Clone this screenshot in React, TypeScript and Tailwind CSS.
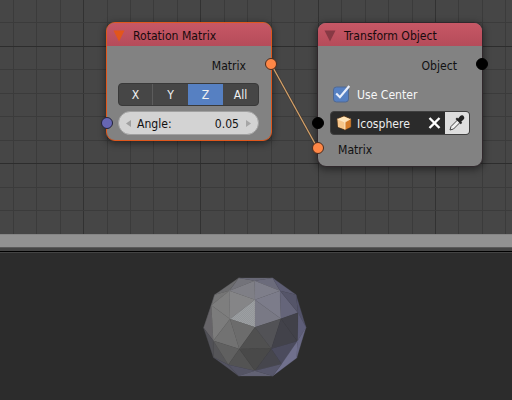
import type { ReactNode } from "react";

const columns = [13, 36, 60, 83, 107, 130, 153, 177, 200, 224, 247, 271, 294, 318, 341, 365, 388, 412, 435, 458, 482, 505];
const rows = [22, 46, 69, 93, 116, 140, 163, 187, 210];
const majors = [83, 200, 318, 435];

const facets: [string, string][] = [
  ["134,30 182,38 106,68", "#73737a"],
  ["134,30 236,30 182,38", "#686876"],
  ["236,30 258,68 182,38", "#6b6b7b"],
  ["236,30 306,80 258,68", "#5d5d73"],
  ["134,30 106,68 62,80", "#6b6b6d"],
  ["182,38 183,95 106,68", "#7f7f86"],
  ["182,38 258,68 183,95", "#7e7e8a"],
  ["62,80 106,68 52,112", "#757575"],
  ["106,68 108,153 52,112", "#7e7e7e"],
  ["106,68 183,95 108,153", "#858587"],
  ["183,95 183,178 108,153", "#94979a"],
  ["183,95 261,152 183,178", "#797985"],
  ["183,95 258,68 261,152", "#7c7c8a"],
  ["258,68 312,134 261,152", "#65657a"],
  ["258,68 306,80 312,134", "#555569"],
  ["306,80 336,178 312,134", "#525269"],
  ["312,134 336,178 310,220", "#5d5d78"],
  ["62,80 52,112 29,180", "#626065"],
  ["52,112 58,218 29,180", "#666468"],
  ["52,112 108,153 58,218", "#7c7c7c"],
  ["108,153 136,243 58,218", "#727272"],
  ["108,153 183,178 136,243", "#6c6c6c"],
  ["183,178 232,242 136,243", "#505050"],
  ["183,178 261,152 232,242", "#525256"],
  ["261,152 310,220 232,242", "#42424a"],
  ["261,152 312,134 310,220", "#414149"],
  ["29,180 58,218 58,268", "#515157"],
  ["58,218 103,290 58,268", "#555558"],
  ["58,218 136,243 103,290", "#606060"],
  ["136,243 183,308 103,290", "#535353"],
  ["136,243 232,242 183,308", "#494949"],
  ["232,242 263,288 183,308", "#46464d"],
  ["232,242 310,220 263,288", "#4b4b5d"],
  ["336,178 308,270 310,220", "#686884"],
  ["310,220 308,270 236,324 263,288", "#70708d"],
  ["58,268 103,290 134,324", "#545461"],
  ["103,290 183,308 134,324", "#545464"],
  ["183,308 236,324 134,324", "#626274"],
  ["183,308 263,288 236,324", "#57576b"],
];

function Grid() {
  return (
    <svg className="absolute inset-0" width="512" height="234" shapeRendering="crispEdges">
      {columns.map((x) => (
        <rect key={x} x={x} y="0" width="1" height="234" fill={majors.includes(x) ? "#323232" : "#3b3b3b"} />
      ))}
      {rows.map((y) => (
        <rect key={y} x="0" y={y} width="512" height="1" fill={y === 46 || y === 163 ? "#2d2d2d" : "#3b3b3b"} />
      ))}
    </svg>
  );
}

function Socket({ className }: { className: string }) {
  return <span className={`absolute h-3 w-3 rounded-full border ${className}`} />;
}

function NodeFrame({ title, active, className, children }: { title: string; active?: boolean; className: string; children: ReactNode }) {
  return (
    <section
      className={`absolute w-[166px] rounded-[9px] border bg-[#828282] shadow-[0_2px_7px_1px_rgba(0,0,0,0.42)] ${active ? "border-[#df571c]" : "border-[#30282c]"} ${className}`}
    >
      <header className="flex h-[23px] items-center rounded-t-[8px] bg-linear-to-b from-[#c75765] to-[#b54c5a] pl-[6px] text-[#180b0d]">
        <svg width="12" height="12" className="mt-[3px] shrink-0">
          <path d="M0.5 0.5h11L6 11.5z" fill={active ? "#e2561b" : "#873944"} />
        </svg>
        <span className="ml-[8px] mt-[2px]">{title}</span>
      </header>
      {children}
    </section>
  );
}

function AxisButtons() {
  return (
    <div className="ml-[11px] mt-[9px] flex h-[23px] w-[141px] overflow-hidden rounded-[4px] border border-[#393939] bg-[#464646] text-center leading-[22px] text-[#f1f1f1]">
      <span className="w-[34px] border-r border-[#5c5c5c]">X</span>
      <span className="w-[35px]">Y</span>
      <span className="w-[35px] bg-[#5680c2]">Z</span>
      <span className="flex-1">All</span>
    </div>
  );
}

function Sphere() {
  return (
    <svg width="124" height="118" viewBox="0 0 372 354" className="ml-[194px] mt-[15px] block">
      <defs>
        <pattern id="dither" width="6" height="6" patternUnits="userSpaceOnUse">
          <path d="M0 0h3v3H0zM3 3h3v3H3z" fill="#fff" opacity=".08" />
        </pattern>
      </defs>
      {facets.map(([points, color]) => (
        <polygon key={points} points={points} fill={color} stroke={color} strokeWidth="0.7" />
      ))}
      <polygon points="183,95 183,178 108,153" fill="url(#dither)" />
    </svg>
  );
}

export default function App() {
  return (
    <main className="flex h-[400px] w-[512px] flex-col overflow-hidden bg-[#2c2c2c] font-['DejaVu_Sans_Condensed','DejaVu_Sans',sans-serif] text-[12.1px] [font-stretch:75%] leading-[16px] text-[#111]">
      <div className="relative h-[234px] shrink-0 overflow-hidden bg-[#464646]">
        <Grid />
        <NodeFrame title="Rotation Matrix" active className="left-[106px] top-[22px] h-[119px]">
          <div className="mt-[12px] h-4 pr-[25px] text-right">Matrix</div>
          <AxisButtons />
          <div className="ml-[11px] mt-[5px] flex h-[24px] w-[141px] items-center justify-between rounded-full border border-[#a0a0a0] bg-[#d3d3d3] px-[7px]">
            <svg width="5" height="7"><path d="M5 0v7L0 3.5z" fill="#a0a0a0" /></svg>
            <span className="ml-[6px] mt-px flex-1">Angle:</span>
            <span className="mr-[7px] mt-px">0.05</span>
            <svg width="5" height="7"><path d="M0 0v7l5-3.5z" fill="#a6a6a6" /></svg>
          </div>
        </NodeFrame>
        <NodeFrame title="Transform Object" className="left-[317px] top-[22px] h-[145px]">
          <div className="mt-[12px] h-4 pr-[25px] text-right">Object</div>
          <div className="mt-[9px] flex h-5 items-center pl-[15px] text-[#f7f7f7]">
            <svg width="18" height="19" viewBox="0 0 18 19">
              <rect x="0.5" y="3" width="15" height="15" rx="3" fill="#5680c2" stroke="#506891" />
              <path d="M3.2 9.5l3.7 3.7L16.3 2" fill="none" stroke="#e8eefb" strokeWidth="2.2" />
            </svg>
            <span className="ml-[6px] mt-[4px]">Use Center</span>
          </div>
          <div className="ml-[12px] mt-[8px] flex h-[24px] w-[140px] items-center overflow-hidden rounded-[4px] border border-[#3f3f3f] bg-[#2b2b2b] pl-[5px] text-[#eeeeee]">
            <svg width="16" height="16" viewBox="0 0 16 16">
              <path d="M8 1l7 3v8l-6 3-7-3-1-8z" fill="#e7963e" stroke="#553b22" />
              <path d="M1.5 4L8 1.5l6 2.5-5 3z" fill="#ffe4b8" />
              <path d="M1.5 4L9 7v7.5L2 12z" fill="#f6c58a" />
              <path d="M9 7l5.5-3v8L9 14.5z" fill="#d57b29" />
              <path d="M1.5 4L9 7l5.5-3M9 7v7.5" fill="none" stroke="#fff0d6" strokeWidth=".8" />
            </svg>
            <span className="ml-[5px] mt-[2px] flex-1">Icosphere</span>
            <svg width="13" height="12" className="mr-[4px]"><path d="M1.5 1l10 10M11.5 1l-10 10" stroke="#fff" strokeWidth="2.4" /></svg>
            <span className="flex h-full w-[24px] items-center justify-center bg-[#dedede]">
              <svg width="18" height="18" viewBox="0 0 18 18">
                <path d="M2 16l1-3.5 7-7 2.5 2.5-7 7z" fill="#f0f0f0" stroke="#444" strokeWidth="1" />
                <path d="M8.3 4.3l5.2 5.2" stroke="#222" strokeWidth="2" />
                <path d="M9.8 5l2.4-3c2-2 5 .4 3.8 3l-3 3z" fill="#222" />
              </svg>
            </span>
          </div>
          <div className="ml-[20px] mt-[7px]">Matrix</div>
        </NodeFrame>
        <svg className="absolute inset-0" width="512" height="234">
          <path d="M271 64L318 149" fill="none" stroke="#3e3732" strokeWidth="2.5" />
          <path d="M271 64L318 149" fill="none" stroke="#d3a16a" strokeWidth="1.3" />
        </svg>
        <Socket className="left-[265px] top-[58px] border-[#4a2a1c] bg-[#ff8746]" />
        <Socket className="left-[101px] top-[117px] border-[#24243a] bg-[#6666b4]" />
        <Socket className="left-[312px] top-[142px] border-[#4a2a1c] bg-[#ff8746]" />
        <Socket className="left-[312px] top-[117px] border-black bg-black" />
        <Socket className="left-[476px] top-[58px] border-black bg-black" />
      </div>
      <div className="h-[13px] shrink-0 border-t border-[#858585] bg-[#929292]" />
      <div className="h-[4px] shrink-0 border-t border-[#5a5a5a] bg-[#454545]" />
      <div className="h-[2px] shrink-0 border-b border-[#444444] bg-black" />
      <div className="h-[147px] shrink-0 bg-[#2c2c2c]"><Sphere /></div>
    </main>
  );
}
